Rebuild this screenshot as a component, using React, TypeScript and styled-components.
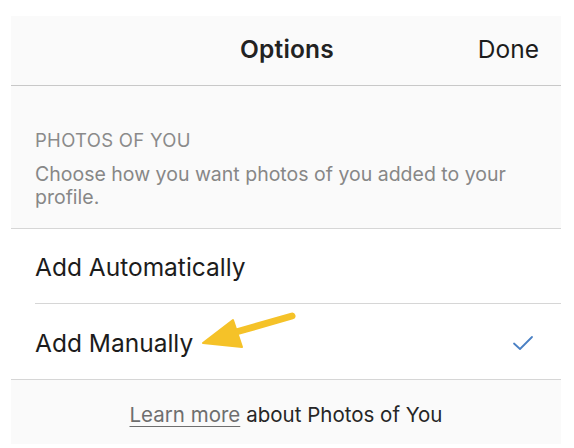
import React from "react";
import styled, { createGlobalStyle } from "styled-components";

const Global = createGlobalStyle`
  html, body { margin: 0; padding: 0; background: #ffffff; }
  body { font-family: Inter, "Noto Sans", "Liberation Sans", sans-serif; -webkit-font-smoothing: antialiased; }
`;

const Page = styled.div`
  width: 574px;
  height: 448px;
  padding: 16px 13px 0 11px;
  box-sizing: border-box;
  position: relative;
`;

const Panel = styled.div`
  width: 550px;
  display: flex;
  flex-direction: column;
  background: #fafafa;
`;

const NavBar = styled.div`
  height: 70px;
  display: grid;
  grid-template-columns: 1fr auto 1fr;
  align-items: center;
  border-bottom: 1px solid #c8c8c8;
  padding: 0 22px 4px 24px;
  box-sizing: border-box;
`;

const Title = styled.div`
  grid-column: 2;
  font-size: 24.5px;
  font-weight: 600;
  color: #222222;
  letter-spacing: 0.2px;
`;

const Done = styled.div`
  grid-column: 3;
  justify-self: end;
  font-size: 24.5px;
  color: #1c1c1c;
`;

const Section = styled.div`
  height: 143px;
  box-sizing: border-box;
  padding: 42px 24px 0 24px;
  border-bottom: 1px solid #d6d6d6;
`;

const SectionTitle = styled.div`
  font-size: 18.5px;
  color: #8a8a8a;
  letter-spacing: 0.3px;
  line-height: 24px;
`;

const SectionText = styled.div`
  margin-top: 11px;
  font-size: 19.5px;
  color: #878787;
  line-height: 23px;
`;

const List = styled.div`
  background: #ffffff;
  display: flex;
  flex-direction: column;
  padding-left: 24px;
  border-bottom: 1px solid #d6d6d6;
`;

const Row = styled.div<{ $last?: boolean }>`
  height: 75px;
  display: flex;
  align-items: center;
  justify-content: space-between;
  padding: 2px 27px 0 0;
  box-sizing: border-box;
  border-bottom: ${(p) => (p.$last ? "none" : "1px solid #d6d6d6")};
  font-size: 24.5px;
  color: #1c1c1c;
`;

const Footer = styled.div`
  height: 64px;
  box-sizing: border-box;
  padding-top: 5px;
  display: flex;
  align-items: center;
  justify-content: center;
  font-size: 20.5px;
  color: #262626;
`;

const LearnMore = styled.span`
  color: #6e6e6e;
  text-decoration: underline;
  text-underline-offset: 4px;
  text-decoration-thickness: 1px;
  margin-right: 6px;
`;

const Arrow = styled.svg`
  position: absolute;
  left: 196px;
  top: 308px;
`;

export default function App() {
  return (
    <>
      <Global />
      <Page>
        <Panel>
          <NavBar>
            <Title>Options</Title>
            <Done>Done</Done>
          </NavBar>
          <Section>
            <SectionTitle>PHOTOS OF YOU</SectionTitle>
            <SectionText>
              Choose how you want photos of you added to your
              <br />
              profile.
            </SectionText>
          </Section>
          <List>
            <Row>Add Automatically</Row>
            <Row $last>
              Add Manually
              <svg width="22" height="16" viewBox="0 0 22 16">
                <path d="M2 8.5 L8 14 L20 2" fill="none" stroke="#4a80c4" strokeWidth="1.8" strokeLinecap="round" strokeLinejoin="round" />
              </svg>
            </Row>
          </List>
          <Footer>
            <LearnMore>Learn more</LearnMore>about Photos of You
          </Footer>
        </Panel>
        <Arrow width="110" height="48" viewBox="0 0 110 48">
          <path d="M96 8 L40 24" stroke="#f5c228" strokeWidth="7" strokeLinecap="round" fill="none" />
          <path d="M7 35 L37 12 L46 39 Z" fill="#f5c228" stroke="#f5c228" strokeWidth="2" strokeLinejoin="round" />
        </Arrow>
      </Page>
    </>
  );
}
